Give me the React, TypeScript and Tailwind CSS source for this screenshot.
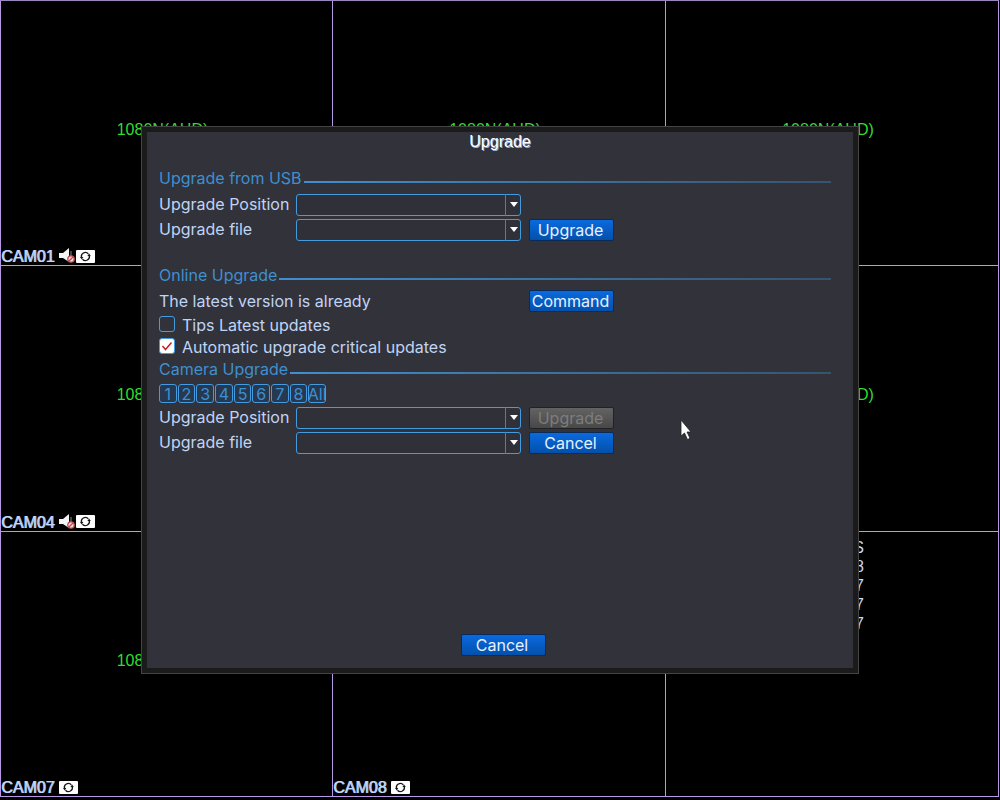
import { useState } from "react";
import type { ReactNode } from "react";

interface Camera {
  id: number;
  name?: string;
  signal?: string;
  muted?: boolean;
  stats?: string[];
}

const cameras: Camera[] = [
  { id: 1, name: "CAM01", signal: "1080N(AHD)", muted: true },
  { id: 2, signal: "1080N(AHD)" },
  { id: 3, signal: "1080N(AHD)" },
  { id: 4, name: "CAM04", signal: "1080N(AHD)", muted: true },
  { id: 5 },
  { id: 6, signal: "1080N(AHD)" },
  { id: 7, name: "CAM07", signal: "1080N(AHD)" },
  { id: 8, name: "CAM08" },
  { id: 9, stats: ["S", "8", "7", "7", "7"] },
];

const channels = ["1", "2", "3", "4", "5", "6", "7", "8", "All"];

function MutedIcon() {
  return (
    <svg className="mr-px" width="16" height="16" viewBox="0 0 16 16" aria-hidden="true">
      <path d="M0 5h4l6-5v14l-6-4H0z" fill="#f4f4f4" />
      <path d="M12 3v5" stroke="#8a8a8a" strokeWidth="1" />
      <circle cx="12" cy="11" r="3.2" fill="#f6dcdc" stroke="#c0474d" strokeWidth="1.3" />
      <path d="M10 13l4-4" stroke="#c0474d" strokeWidth="1.3" />
    </svg>
  );
}

function CycleIcon() {
  return (
    <svg width="19" height="13" viewBox="0 0 19 13" aria-hidden="true">
      <rect width="19" height="13" rx="1" fill="#fff" />
      <path d="M5.7 7.7a3.9 3.9 0 0 1 6.6-3.9" fill="none" stroke="#151515" strokeWidth="1.4" />
      <path d="M13.1 5.3a3.9 3.9 0 0 1-6.6 3.9" fill="none" stroke="#151515" strokeWidth="1.4" />
      <path d="M11.4 6h3.4l-1.7-2.4z" fill="#151515" />
      <path d="M7.4 7H4l1.7 2.4z" fill="#151515" />
    </svg>
  );
}

function CameraCell({ camera }: { camera: Camera }) {
  return (
    <div className="grid overflow-hidden border-r border-b border-[#bb98e6] nth-[3n+1]:border-l">
      {camera.signal && (
        <span className="col-start-1 row-start-1 place-self-center pr-2 pb-1.5 text-[#30dc30]">{camera.signal}</span>
      )}
      {camera.name && (
        <div className="col-start-1 row-start-1 flex h-[18px] items-center self-end text-[#c3d8fb]">
          <span className="mr-[5px] pt-0.5 [text-shadow:1px_0_#a9c4f0]">{camera.name}</span>
          {camera.muted && <MutedIcon />}
          <CycleIcon />
        </div>
      )}
      {camera.stats && (
        <ul className="pt-1.5 pr-[134px] text-right leading-[19px] text-[#c9d8fb]">
          {camera.stats.map((value, i) => (
            <li key={i}>{value}</li>
          ))}
        </ul>
      )}
    </div>
  );
}

function SectionTitle({ children, className = "h-[26px]" }: { children: ReactNode; className?: string }) {
  return (
    <div className={`flex items-center gap-0.5 text-[#3f8fd0] ${className}`}>
      <h2>{children}</h2>
      <div className="mt-2 h-0.5 flex-1 bg-linear-to-r from-[#3f8fd0] to-[#35546e]" />
    </div>
  );
}

function SelectRow({ id, label, children }: { id: string; label: string; children?: ReactNode }) {
  return (
    <div className="flex h-[25px] items-center">
      <label htmlFor={id} className="mb-0.5 w-[137px]">
        {label}
      </label>
      <div className="relative mr-2 h-[22px] w-[225px]">
        <select
          id={id}
          className="h-full w-full appearance-none rounded-[3px] border border-[#469ade] bg-[#2f3038] px-1 outline-none"
        >
          <option value=""></option>
        </select>
        <div className="pointer-events-none absolute inset-y-0 right-0 flex w-4 items-center justify-center border-l border-[#3d83bd]">
          <svg width="8" height="5" viewBox="0 0 8 5" aria-hidden="true">
            <path d="M0 0h8L4 5z" fill="#fff" />
          </svg>
        </div>
      </div>
      {children}
    </div>
  );
}

function ActionButton({ children, disabled }: { children: ReactNode; disabled?: boolean }) {
  return (
    <button
      type="button"
      disabled={disabled}
      className="flex h-[22px] w-[85px] items-center justify-center rounded-xs border border-[#0a2b57] bg-linear-to-b from-[#0b6ade] to-[#0350ab] pr-0.5 text-[#e6f1ff] disabled:border-[#222] disabled:from-[#636363] disabled:to-[#484848] disabled:text-[#7d7d7d]"
    >
      {children}
    </button>
  );
}

interface CheckRowProps {
  label: string;
  checked: boolean;
  onChange: (value: boolean) => void;
}

function CheckRow({ label, checked, onChange }: CheckRowProps) {
  return (
    <label className="flex h-[22px] items-center gap-[7px]">
      <span className="relative mb-0.5 size-4">
        <input
          type="checkbox"
          checked={checked}
          onChange={(e) => onChange(e.target.checked)}
          className="block size-4 appearance-none rounded-[3px] border border-[#469ade] checked:bg-white"
        />
        {checked && (
          <svg className="pointer-events-none absolute inset-0" width="16" height="16" viewBox="0 0 16 16" aria-hidden="true">
            <path d="M3.5 8l3 3.5 6-7" fill="none" stroke="#c8202c" strokeWidth="1.5" />
          </svg>
        )}
      </span>
      {label}
    </label>
  );
}

export default function App() {
  const [tips, setTips] = useState(false);
  const [automatic, setAutomatic] = useState(true);

  return (
    <div className="relative h-screen bg-black pr-px pb-[3px] font-['Liberation_Sans',Arial,sans-serif] text-base">
      <div className="grid h-full grid-cols-3 grid-rows-3 border-t border-[#9a86bd]">
        {cameras.map((camera) => (
          <CameraCell key={camera.id} camera={camera} />
        ))}
      </div>

      <div className="absolute inset-0 flex items-center justify-center">
        <div
          role="dialog"
          aria-labelledby="dialog-title"
          className="w-full max-w-[718px] border border-[#444444] bg-[#1b1b1c] p-[5px] font-[Inter,'Liberation_Sans',sans-serif] leading-5 text-[#c0d4f6]"
        >
          <div className="flex min-h-[536px] flex-col bg-[#31323a] pr-[22px] pb-3 pl-3">
            <h1
              id="dialog-title"
              className="mb-4 h-[18px] pl-2.5 text-center font-['Liberation_Sans',Arial,sans-serif] leading-5 text-white [text-shadow:1px_1px_#8fb0e6]"
            >
              Upgrade
            </h1>

            <section className="mb-5">
              <SectionTitle className="h-[26px] pb-0.5">Upgrade from USB</SectionTitle>
              <SelectRow id="usb-position" label="Upgrade Position" />
              <SelectRow id="usb-file" label="Upgrade file">
                <ActionButton>Upgrade</ActionButton>
              </SelectRow>
            </section>

            <section>
              <SectionTitle>Online Upgrade</SectionTitle>
              <div className="flex h-[26px] items-center">
                <p className="w-[370px]">The latest version is already</p>
                <ActionButton>Command</ActionButton>
              </div>
              <CheckRow label="Tips Latest updates" checked={tips} onChange={setTips} />
              <CheckRow label="Automatic upgrade critical updates" checked={automatic} onChange={setAutomatic} />
            </section>

            <section>
              <SectionTitle className="h-[22px]">Camera Upgrade</SectionTitle>
              <div className="grid h-[25px] w-[168px] grid-cols-9 items-center pt-0.5">
                {channels.map((channel) => (
                  <button
                    key={channel}
                    type="button"
                    className="mr-px flex h-[19px] min-w-0 items-center justify-center overflow-hidden rounded-[3px] border border-[#469ade] bg-[#263950] leading-4 text-[#3f8fd0]"
                  >
                    {channel}
                  </button>
                ))}
              </div>
              <SelectRow id="camera-position" label="Upgrade Position">
                <ActionButton disabled>Upgrade</ActionButton>
              </SelectRow>
              <SelectRow id="camera-file" label="Upgrade file">
                <ActionButton>Cancel</ActionButton>
              </SelectRow>
            </section>

            <div className="mt-auto flex justify-center pl-4">
              <ActionButton>Cancel</ActionButton>
            </div>
          </div>
        </div>
      </div>

      <svg
        className="pointer-events-none absolute top-[419px] left-[680px]"
        width="13"
        height="22"
        viewBox="0 0 13 22"
        aria-hidden="true"
      >
        <path d="M1 1v16l3.5-3 3 6.5 2.5-1.2-3-6.3H11z" fill="#fff" stroke="#222" strokeWidth="0.8" />
      </svg>
    </div>
  );
}
